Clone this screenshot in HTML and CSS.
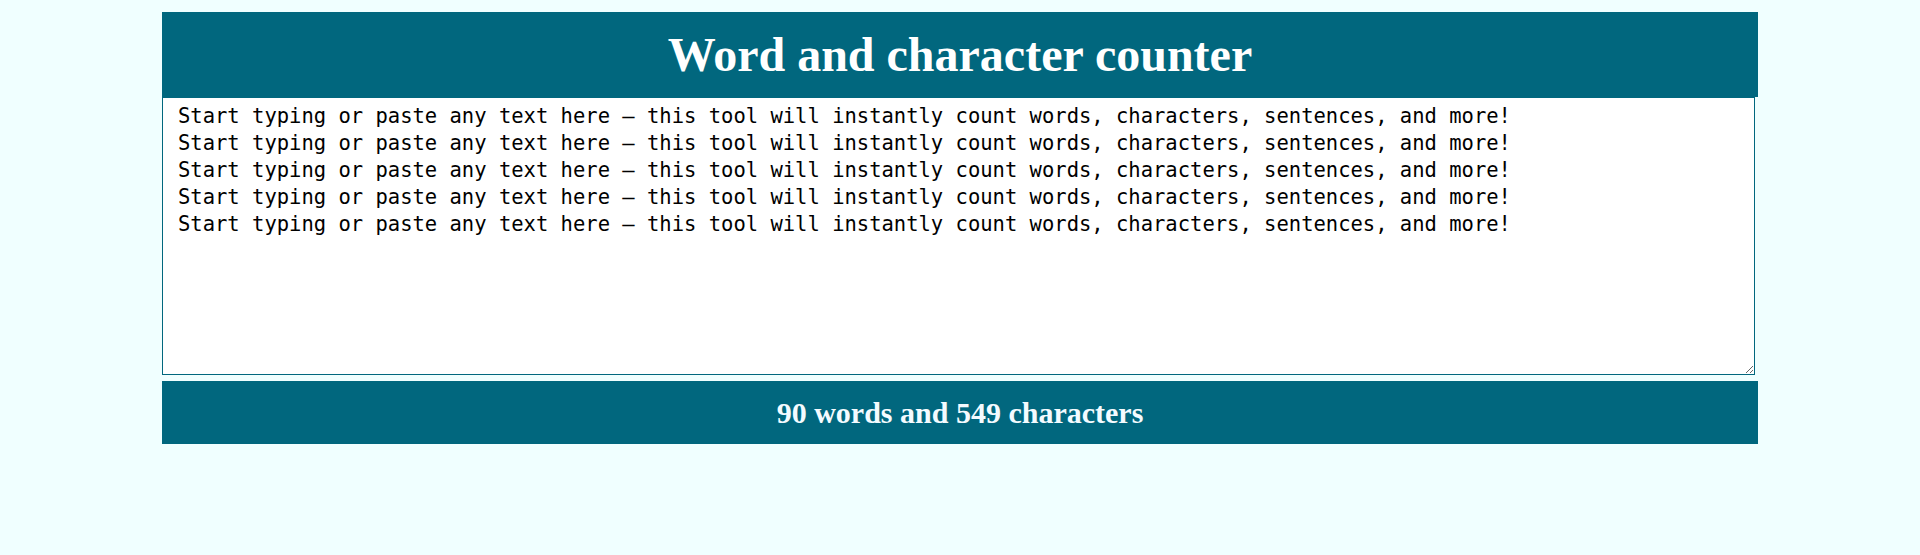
FILE: index.html
```html
<!DOCTYPE html>
<html lang="en">
<head>
<meta charset="utf-8">
<title>Word and character counter</title>
<link rel="stylesheet" href="styles.css">
</head>
<body>
<main class="counter">
  <h1 class="counter-title">Word and character counter</h1>
  <textarea class="counter-input" spellcheck="false">Start typing or paste any text here — this tool will instantly count words, characters, sentences, and more!
Start typing or paste any text here — this tool will instantly count words, characters, sentences, and more!
Start typing or paste any text here — this tool will instantly count words, characters, sentences, and more!
Start typing or paste any text here — this tool will instantly count words, characters, sentences, and more!
Start typing or paste any text here — this tool will instantly count words, characters, sentences, and more!</textarea>
  <div class="counter-result">90 words and 549 characters</div>
</main>
</body>
</html>
```

FILE: styles.css
```css
html, body {
  margin: 0;
  padding: 0;
  background: #f0ffff;
  font-family: "Liberation Serif", "Times New Roman", serif;
}

.counter {
  width: 1596px;
  margin: 12px auto 0;
  display: flex;
  flex-direction: column;
  align-items: flex-start;
}

.counter-title {
  box-sizing: border-box;
  width: 100%;
  height: 85px;
  margin: 0;
  background: #01677e;
  color: #ffffff;
  font-size: 48px;
  font-weight: bold;
  display: flex;
  align-items: center;
  justify-content: center;
}

.counter-input {
  box-sizing: border-box;
  width: 1593px;
  height: 278px;
  margin: 0;
  padding: 5px 15px 2px;
  border: 1px solid #01677e;
  background: #ffffff;
  color: #000000;
  font-family: "DejaVu Sans Mono", "Liberation Mono", monospace;
  font-size: 20.5px;
  line-height: 27px;
  outline: none;
}

.counter-result {
  box-sizing: border-box;
  width: 100%;
  height: 63px;
  margin-top: 6px;
  background: #01677e;
  color: #f4fbff;
  font-size: 30px;
  font-weight: bold;
  display: flex;
  align-items: center;
  justify-content: center;
}
```
